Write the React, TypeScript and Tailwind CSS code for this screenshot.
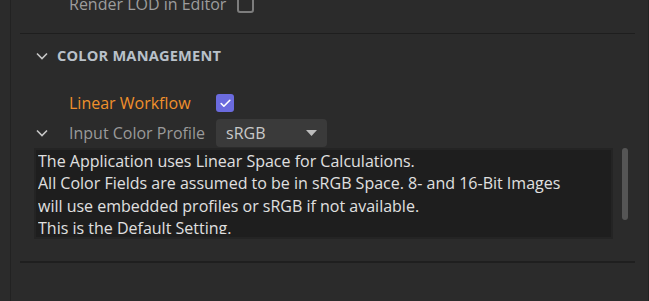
import { Check } from 'lucide-react';

const font = { fontFamily: '"Open Sans", "Noto Sans", sans-serif' };

function Chevron() {
  return (
    <svg width="12" height="8" viewBox="0 0 12 8" className="shrink-0">
      <path d="M1 1.5 L6 6.5 L11 1.5" fill="none" stroke="#c6c6c6" strokeWidth="1.6" />
    </svg>
  );
}

export default function App() {
  return (
    <div
      className="w-[649px] h-[301px] bg-[#2b2b2b] flex overflow-hidden"
      style={font}
    >
      <div className="w-[11px] shrink-0 border-r border-[#222222]" />
      <div className="flex-1 flex flex-col border-r border-[#232323]">
        {/* clipped row from the previous section */}
        <div className="h-[33px] overflow-hidden">
          <div className="flex items-center h-[22px] -mt-[7px] pl-[58px] text-[16px] text-[#9d9d9d]">
            <span className="w-[168px]">Render LOD in Editor</span>
            <span className="w-[17px] h-[17px] rounded-[3px] border-2 border-[#7d7d7d]" />
          </div>
        </div>
        <div className="h-px bg-[#1e1e1e] ml-[9px] mr-[13px]" />

        {/* section header */}
        <div className="flex items-center h-[42px] pl-[25px] pt-[2px]">
          <Chevron />
          <span className="ml-[9px] text-[14.6px] font-bold tracking-[0.2px] text-[#b9c1c9]">
            COLOR MANAGEMENT
          </span>
        </div>

        <div className="h-[14px]" />

        {/* linear workflow */}
        <div className="flex items-center h-[26px] pl-[58px]">
          <span className="w-[147px] text-[16px] text-[#f0902c]">Linear Workflow</span>
          <span className="w-[18px] h-[18px] rounded-[3px] bg-[#6b6bde] flex items-center justify-center">
            <Check className="w-[13px] h-[13px] text-white" strokeWidth={3} />
          </span>
        </div>

        {/* input color profile */}
        <div className="flex items-center h-[28px] pl-[25px] mt-[3px]">
          <Chevron />
          <span className="ml-[21px] w-[147px] text-[16px] text-[#9a9a9a]">Input Color Profile</span>
          <div className="w-[111px] h-[28px] rounded-[4px] bg-[#3a3a3a] flex items-center justify-between pl-[10px] pr-[10px]">
            <span className="text-[16px] text-[#c9c9c9]">sRGB</span>
            <svg width="11" height="6" viewBox="0 0 11 6">
              <path d="M0 0 L11 0 L5.5 6 Z" fill="#bdbdbd" />
            </svg>
          </div>
        </div>

        {/* description box */}
        <div className="flex mt-px ml-[23px]">
          <div className="w-[579px] h-[91px] bg-[#1e1e1e] border-2 border-[#242424] pl-[2px]">
            <div className="h-[84px] overflow-hidden">
              <p className="text-[16px] leading-[22.3px] text-[#e0e0e0] whitespace-pre">
                {'The Application uses Linear Space for Calculations.\nAll Color Fields are assumed to be in sRGB Space. 8- and 16-Bit Images\nwill use embedded profiles or sRGB if not available.\nThis is the Default Setting.'}
              </p>
            </div>
          </div>
          <div className="ml-[9px] w-[6px] h-[72px] rounded-full bg-[#555555]" />
        </div>

        <div className="h-[22px]" />
        <div className="h-[2px] bg-[#1f1f1f] ml-[9px] mr-[13px]" />
      </div>
    </div>
  );
}
